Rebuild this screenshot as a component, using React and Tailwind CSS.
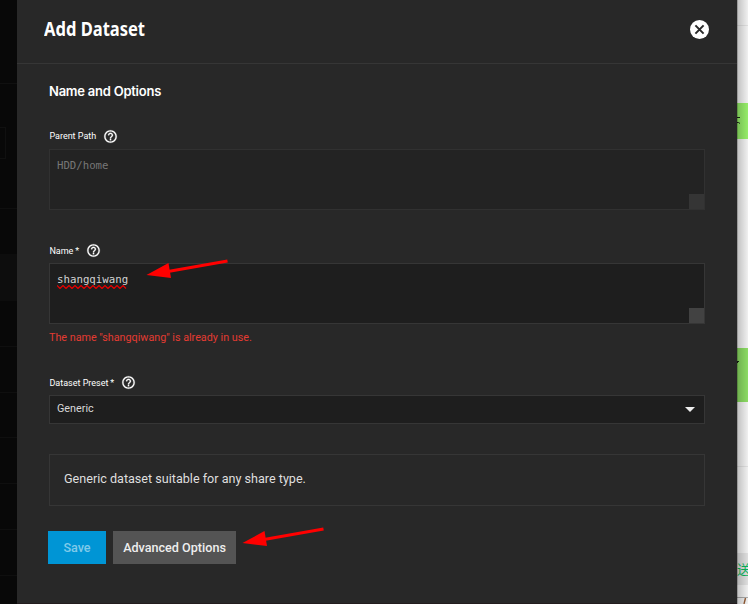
import React from 'react';

function HelpIcon() {
  return (
    <svg viewBox="0 0 24 24" className="h-[15px] w-[15px] shrink-0" fill="#fff" stroke="#fff" strokeWidth="0.4">
      <path d="M11 18h2v-2h-2v2zm1-16C6.48 2 2 6.48 2 12s4.48 10 10 10 10-4.48 10-10S17.52 2 12 2zm0 18c-4.41 0-8-3.59-8-8s3.59-8 8-8 8 3.59 8 8-3.59 8-8 8zm0-14c-2.21 0-4 1.79-4 4h2c0-1.1.9-2 2-2s2 .9 2 2c0 2-3 1.75-3 5h2c0-2.25 3-2.5 3-5 0-2.21-1.79-4-4-4z" />
    </svg>
  );
}

function Label({ children, textClass, gap }) {
  return (
    <div className={'flex h-[15px] items-center pl-[0.4px] text-[9px] leading-[15px] text-white ' + gap}>
      <span className={textClass}>{children}</span>
      <HelpIcon />
    </div>
  );
}

function Arrow({ className }) {
  return (
    <svg viewBox="0 0 84 22" className={'pointer-events-none absolute h-[22px] w-[84px] ' + className}>
      <path d="M22 13.5 81.5 3" stroke="#f00" strokeWidth="2.8" />
      <path d="M.5 17 22.5 5 25 20Z" fill="#f00" />
    </svg>
  );
}

function Backdrop() {
  return (
    <aside className="flex w-[17px] shrink-0 flex-col bg-[#080808]">
      <div className="h-[84px] shrink-0 border-b border-[#101010]" />
      <div className="h-[43px] shrink-0" />
      <div className="h-8 w-1.5 shrink-0 border-y border-r border-[#101010]" />
      <div className="h-[50px] shrink-0 border-b border-[#0f0f0f]" />
      <div className="h-[45px] shrink-0" />
      <div className="h-[47px] shrink-0 bg-[#0d0d0d]" />
      <div className="h-[46px] shrink-0 border-b border-[#0f0f0f]" />
      <div className="h-[46px] shrink-0 border-b border-[#0f0f0f]" />
      <div className="h-[45px] shrink-0 border-b border-[#0f0f0f]" />
      <div className="h-[46px] shrink-0 border-b border-[#0f0f0f]" />
      <div className="h-[46px] shrink-0 border-b border-[#0f0f0f]" />
      <div className="h-[46px] shrink-0 border-b border-[#0f0f0f]" />
    </aside>
  );
}

function ChatEdge() {
  return (
    <aside className="relative flex w-[11px] shrink-0 flex-col overflow-hidden bg-[#f0f0f0]">
      <div className="h-[26px] shrink-0 border-b border-[#dedede]" />
      <div className="h-[77px] shrink-0" />
      <div className="h-9 shrink-0 bg-[#95ec69]">
        <svg viewBox="0 0 11 36" className="h-9 w-[11px]" stroke="#182413" fill="none">
          <path d="M0 14.5h3M0 19.5h1.5l1.5 1" />
        </svg>
      </div>
      <div className="h-[209px] shrink-0" />
      <div className="h-[54px] shrink-0 bg-[#8bdb63]">
        <svg viewBox="0 0 11 54" className="h-[54px] w-[11px]" stroke="#182413" fill="none">
          <path d="M0 13.5h2M0 14.5h1" />
        </svg>
      </div>
      <div className="h-[65px] shrink-0 border-b border-[#dedede]" />
      <div className="h-[86px] shrink-0" />
      <div className="flex h-8 shrink-0 items-center bg-[#dedede]">
        <span className="-mt-px font-['Noto_Sans_CJK_SC',sans-serif] text-[13px] leading-none text-[#07b65b]">送</span>
      </div>
      <div className="h-[13px] shrink-0 border-b border-[#a9a9a9]" />
      <svg viewBox="0 0 11 6" className="h-1.5 w-[11px] shrink-0">
        <path d="M7 6 8.5 0" stroke="#925b35" strokeWidth="1.4" />
      </svg>
      <div className="absolute inset-0 bg-linear-to-r from-black/20 to-transparent" />
      <div className="absolute inset-y-0 left-0 w-px bg-black/20" />
    </aside>
  );
}

export default function App() {
  return (
    <div className="flex h-[604px] w-[748px] overflow-hidden bg-[#282828] font-['Roboto',sans-serif]">
      <Backdrop />
      <main className="relative w-[720px] shrink-0 border-b border-[#231c1e] bg-[#282828]">
        <header className="flex h-16 items-center justify-between border-b border-[#363636] pb-[5px] pl-[27px] pr-[28px]">
          <h1 className="origin-left scale-x-[0.87] whitespace-nowrap font-['Noto_Sans',sans-serif] text-[19px] font-bold leading-6 text-white">
            Add Dataset
          </h1>
          <svg viewBox="2 2 20 20" className="h-[19px] w-[19px]">
            <circle cx="12" cy="12" r="10" fill="#fff" />
            <path d="m7.7 7.7 8.6 8.6m0-8.6-8.6 8.6" stroke="#282828" strokeWidth="2.1" />
          </svg>
        </header>

        <section className="flex flex-col pl-8 pr-8">
          <h2 className="mt-[17px] font-['Inter',sans-serif] text-[13px] font-semibold leading-5 tracking-[-0.24px] text-white">
            Name and Options
          </h2>

          <div className="mt-[28px]">
            <Label gap="gap-[7px]" textClass="">Parent Path</Label>
            <div className="mt-[5px] flex h-[61px] items-start justify-between border border-[#313131] bg-[#232323] pl-[7px]">
              <span className="mt-[9px] font-['DejaVu_Sans_Mono',monospace] text-[10.7px] leading-[14px] text-[#777]">HDD/home</span>
              <span className="h-[15px] w-[15px] self-end bg-[#353535]" />
            </div>
          </div>

          <div className="mt-[33px]">
            <Label gap="gap-[6.6px]" textClass="mt-[2px]">Name&thinsp;*</Label>
            <div className="mt-[5px] flex h-[61px] items-start justify-between border border-[#363636] bg-[#1e1e1e] pl-[7px]">
              <span className="relative mt-[9px] font-['DejaVu_Sans_Mono',monospace] text-[10.75px] leading-[14px] text-[#d2d2d2]">
                shangqiwang
                <svg viewBox="0 0 72 4" className="absolute left-0 top-3 h-1 w-[72px]" fill="none" stroke="#e60000" strokeWidth="1.2">
                  <path d="M0 .5l3 3 3-3 3 3 3-3 3 3 3-3 3 3 3-3 3 3 3-3 3 3 3-3 3 3 3-3 3 3 3-3 3 3 3-3 3 3 3-3 3 3 3-3 3 3" />
                </svg>
              </span>
              <span className="h-[15px] w-[15px] self-end bg-[#424242]" />
            </div>
            <p className="mt-[6px] text-[10.75px] leading-4 text-[#e33b32]">The name "shangqiwang" is already in use.</p>
          </div>

          <div className="mt-[29px]">
            <Label gap="gap-[6.6px]" textClass="mt-[2px]">Dataset Preset&thinsp;*</Label>
            <div className="mt-[5px] flex h-[29px] items-center justify-between border border-[#363636] bg-[#1e1e1e] pl-[7px] pr-[9px] text-[10.8px] leading-4 text-[#d8d8d8]">
              <span className="-mt-px">Generic</span>
              <svg viewBox="0 0 10 5" className="h-[5px] w-[10px]">
                <path d="M0 0h10L5 5Z" fill="#eee" />
              </svg>
            </div>
          </div>

          <p className="mt-[30px] h-[52px] border border-[#363636] pl-[14px] pt-[14px] text-[12.6px] leading-5 text-[#dfdfdf]">
            Generic dataset suitable for any share type.
          </p>

          <div className="-ml-px mt-[25px] flex gap-[7px] text-[12.6px] font-medium">
            <button className="h-[33px] w-[58px] bg-[#0095d5] pt-px text-[#80caea]">Save</button>
            <button className="h-[33px] w-[123px] bg-[#545454] pt-px text-[#eee]">Advanced Options</button>
          </div>
        </section>

        <Arrow className="left-[129px] top-[258px]" />
        <Arrow className="left-[225px] top-[526px]" />
      </main>
      <ChatEdge />
    </div>
  );
}
